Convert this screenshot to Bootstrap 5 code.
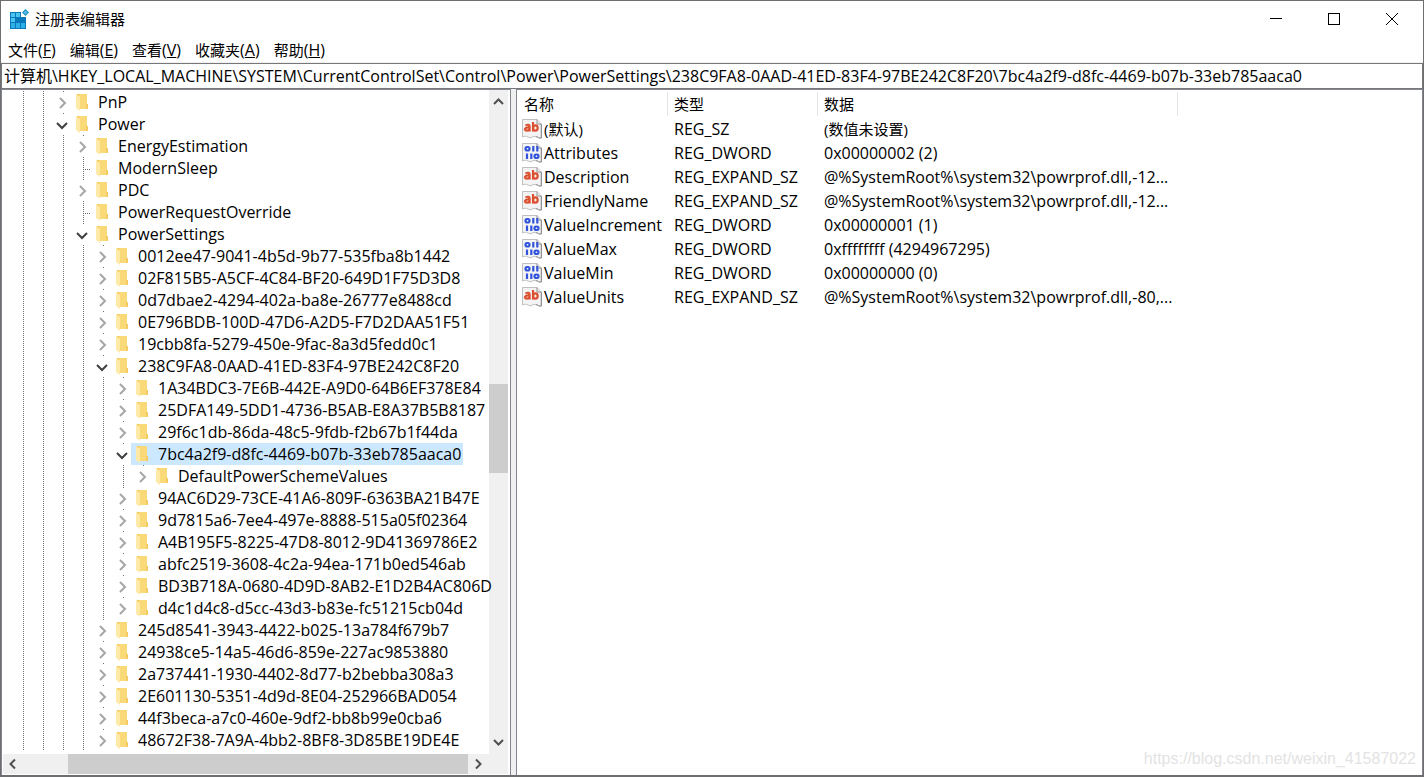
<!DOCTYPE html>
<html lang="zh-CN">
<head>
<meta charset="utf-8">
<meta name="viewport" content="width=device-width, initial-scale=1">
<title>注册表编辑器</title>
<link href="https://cdn.jsdelivr.net/npm/bootstrap@5.3.0/dist/css/bootstrap.min.css" rel="stylesheet">
<style>
body { font-family: "Open Sans", "Noto Sans CJK SC", sans-serif; font-size: 16px; line-height: 22px; color: #000; background: #fff; }
.regedit { border: 1px solid #6e6d70; border-bottom-width: 2px; background: #f0f0f0; }
.title-bar { height: 36px; padding: 0 2px 0 8px; }
.title-bar h1, .han { font-size: 15px; line-height: 22px; font-weight: 400; }
.title-bar h1 { padding-left: 6px; }
.win-btn { width: 58px; height: 36px; padding: 0; border: 0; background: none; }
.menu-bar { height: 25px; padding-left: 7px; gap: 14px; margin-bottom: 1px; }
.menu-bar a { color: #000; text-decoration: none; }
.address { height: 26px; border: 1px solid #77767a; padding: 0 3px 2px 2px; background: #fff; outline: 0; color: #000; }
.pane { border: 1px solid #828790; background: #fff; }
.tree-pane { width: 510px; }
.tree { padding-top: 1px; min-width: 0; z-index: 1; }
.tree-row { height: 22px; padding-left: 9px; white-space: nowrap; }
.cell { width: 20px; height: 22px; flex: none; }
.guide { background: repeating-linear-gradient(#707070 0 1px, transparent 1px 2px) 12px 0 / 1px 22px no-repeat; }
.leaf { background: repeating-linear-gradient(#707070 0 1px, transparent 1px 2px) 12px 0 / 1px 22px no-repeat, repeating-linear-gradient(90deg, #707070 0 1px, transparent 1px 2px) 12px 12px / 8px 1px no-repeat; }
.toggle { border: 0; padding: 0; background: linear-gradient(#707070, #707070) 12px 0 / 1px 1px no-repeat; }
.toggle svg, .node svg, .win-btn svg, .bar-btn svg { display: block; }
.node { padding: 0 2px 0 5px; gap: 10px; height: 22px; line-height: 22px; }
.node.selected { background: #cce8ff; }
.v-bar { width: 19px; background: #f0f0f0; margin-right: 2px; }
.h-bar { height: 20px; background: #f0f0f0; margin: 0 2px 1px 1px; }
.thumb { background: #cdcdcd; }
.bar-btn { border: 0; padding: 0; background: none; width: 20px; height: 20px; flex: none; }
.v-bar .bar-btn { width: 19px; }
.list-pane { margin-left: 5px; }
.values { border-collapse: collapse; table-layout: fixed; width: 661px; }
.values th { height: 27px; padding: 0 0 0 7px; background: linear-gradient(#e5e5e5, #e5e5e5) right 2px / 1px 24px no-repeat; }
.values th + th { padding-left: 6px; }
.values td { height: 24px; padding: 0 0 0 6px; white-space: nowrap; }
.values td:first-child { padding-left: 5px; }
.values svg { flex: none; margin-right: 2px; }
.stamp { right: 7px; bottom: 6px; font: 16px/20px "Liberation Sans", sans-serif; color: #e3e3e3; }
</style>
</head>
<body>
<svg class="d-none" aria-hidden="true">
  <symbol id="folder" viewBox="0 0 12 17">
    <path d="M1 0H11V10H12V15H3L1 14Z" fill="#f3cb62"/>
    <path d="M3 0H11V10H10V15H4Z" fill="#fad978"/>
    <path d="M0 0L4 3V17L0 14Z" fill="#ffe9a6"/>
  </symbol>
  <symbol id="page" viewBox="0 0 20 20">
    <path d="M.5.5H15L19 5V19C16 19.500 15 17 12 17.500C9 18 9 19.500 6 18C4 17 3 17 .5 18Z" fill="#f4f4f4" stroke="#c0c0c0"/>
    <path d="M15 .5V5H19.500V19C17 19.500 16 18 14 17.500" fill="none" stroke="#909090"/>
  </symbol>
  <symbol id="string" viewBox="0 0 20 20">
    <use href="#page"/>
    <g fill="none" stroke="#dc4f30" stroke-width="2.200"><path d="M3.500 6.200Q7.600 4.800 7.600 7.500V12.500M7.600 8.500C2 8 2 11.600 4.800 11.600Q7 11.600 7.600 10M11 3V12.500"/><ellipse cx="13.400" cy="9" rx="2.300" ry="2.700"/></g>
  </symbol>
  <symbol id="binary" viewBox="0 0 20 20">
    <use href="#page"/>
    <g fill="none" stroke="#3355dc" stroke-width="2.200"><rect x="3.500" y="4" width="4" height="3.500" rx="1.700"/><path d="M11.300 3V8.500M15.300 3V8.500M5 10.500V16M9.300 10.500V16"/><rect x="12.500" y="11.500" width="4" height="3.500" rx="1.700"/></g>
  </symbol>
</svg>

<div class="regedit d-flex flex-column vh-100 position-relative">
  <header class="title-bar d-flex align-items-center bg-white">
    <svg width="20" height="20" viewBox="0 0 20 20" aria-hidden="true">
      <path d="M1 3H17V20H1Z" fill="#0a78b8"/>
      <g fill="#4cc4f2"><path d="M2 4H6V8H2ZM7 4H11V8H7ZM2 9H6V13H2Z"/></g>
      <g fill="#2cb0e8"><path d="M2 14H6V19H2ZM7 14H11V19H7ZM12 14H16V19H12Z"/></g>
      <g fill="#0878bc"><path d="M7 9H11V13H7ZM12 9H16V13H12Z"/></g>
      <path d="M12 2H18V8H12Z" fill="#fff"/><path d="M16.500 0L20 3.500L16.500 7L13 3.500Z" fill="#178ec7"/><path d="M16.500 1.500L18.500 3.500L16.500 5.500L14.500 3.500Z" fill="#58bce6"/>
    </svg>
    <h1 class="mb-0 me-auto">注册表编辑器</h1>
    <button class="win-btn" aria-label="最小化"><svg class="mx-auto" width="12" height="12"><path d="M0 5.500H12" stroke="#000"/></svg></button>
    <button class="win-btn" aria-label="最大化"><svg class="mx-auto" width="12" height="12"><rect x=".5" y=".5" width="11" height="11" fill="none" stroke="#000"/></svg></button>
    <button class="win-btn" aria-label="关闭"><svg class="mx-auto" width="12" height="12"><path d="M0 0L12 12M12 0L0 12" stroke="#000"/></svg></button>
  </header>
  <nav class="menu-bar d-flex align-items-center bg-white">
    <a href="#"><span class="han">文件</span>(<u>F</u>)</a><a href="#"><span class="han">编辑</span>(<u>E</u>)</a><a href="#"><span class="han">查看</span>(<u>V</u>)</a><a href="#"><span class="han">收藏夹</span>(<u>A</u>)</a><a href="#"><span class="han">帮助</span>(<u>H</u>)</a>
  </nav>
  <input class="address w-100" type="text" aria-label="地址" value="计算机\HKEY_LOCAL_MACHINE\SYSTEM\CurrentControlSet\Control\Power\PowerSettings\238C9FA8-0AAD-41ED-83F4-97BE242C8F20\7bc4a2f9-d8fc-4469-b07b-33eb785aaca0">
  <main class="d-flex flex-grow-1 overflow-hidden">
    <section class="pane tree-pane d-flex flex-column flex-shrink-0 border-bottom-0">
      <div class="d-flex flex-grow-1 overflow-hidden">
        <div class="tree flex-grow-1" id="tree" role="tree"></div>
        <div class="v-bar d-flex flex-column flex-shrink-0">
          <button class="bar-btn" aria-label="向上"><svg width="19" height="20"><path d="M5 14L9.500 9.500L14 14" fill="none" stroke="#505050" stroke-width="2"/></svg></button>
          <div style="flex:273"></div><div class="thumb" style="flex:89"></div><div style="flex:260"></div>
          <button class="bar-btn" aria-label="向下"><svg width="19" height="20"><path d="M5 6L9.500 10.500L14 6" fill="none" stroke="#505050" stroke-width="2"/></svg></button>
        </div>
      </div>
      <div class="h-bar d-flex">
        <button class="bar-btn" aria-label="向左"><svg width="20" height="20"><path d="M12 5.500L7.500 10L12 14.500" fill="none" stroke="#505050" stroke-width="2"/></svg></button>
        <div style="flex:45"></div><div class="thumb" style="flex:399"></div>
        <button class="bar-btn" aria-label="向右"><svg width="20" height="20"><path d="M8 5.500L12.500 10L8 14.500" fill="none" stroke="#505050" stroke-width="2"/></svg></button>
        <div class="bar-btn"></div>
      </div>
    </section>
    <section class="pane list-pane flex-grow-1 border-bottom-0 overflow-hidden">
      <table class="values">
        <colgroup><col style="width:151px"><col style="width:150px"><col style="width:360px"></colgroup>
        <thead><tr><th class="han">名称</th><th class="han">类型</th><th class="han">数据</th></tr></thead>
        <tbody id="values"></tbody>
      </table>
    </section>
  </main>
  <div class="stamp position-absolute">https://blog.csdn.net/weixin_41587022</div>
</div>

<script src="https://cdn.jsdelivr.net/npm/bootstrap@5.3.0/dist/js/bootstrap.bundle.min.js"></script>
<script>
// [depth, state, name]; state: + collapsed, - expanded, empty for a key without subkeys
const keys = [
  [2, '+', 'PnP'], [2, '-', 'Power'], [3, '+', 'EnergyEstimation'], [3, '', 'ModernSleep'], [3, '+', 'PDC'],
  [3, '', 'PowerRequestOverride'], [3, '-', 'PowerSettings'],
  [4, '+', '0012ee47-9041-4b5d-9b77-535fba8b1442'], [4, '+', '02F815B5-A5CF-4C84-BF20-649D1F75D3D8'],
  [4, '+', '0d7dbae2-4294-402a-ba8e-26777e8488cd'], [4, '+', '0E796BDB-100D-47D6-A2D5-F7D2DAA51F51'],
  [4, '+', '19cbb8fa-5279-450e-9fac-8a3d5fedd0c1'], [4, '-', '238C9FA8-0AAD-41ED-83F4-97BE242C8F20'],
  [5, '+', '1A34BDC3-7E6B-442E-A9D0-64B6EF378E84'], [5, '+', '25DFA149-5DD1-4736-B5AB-E8A37B5B8187'],
  [5, '+', '29f6c1db-86da-48c5-9fdb-f2b67b1f44da'], [5, '-', '7bc4a2f9-d8fc-4469-b07b-33eb785aaca0'],
  [6, '+', 'DefaultPowerSchemeValues'],
  [5, '+', '94AC6D29-73CE-41A6-809F-6363BA21B47E'], [5, '+', '9d7815a6-7ee4-497e-8888-515a05f02364'],
  [5, '+', 'A4B195F5-8225-47D8-8012-9D41369786E2'], [5, '+', 'abfc2519-3608-4c2a-94ea-171b0ed546ab'],
  [5, '+', 'BD3B718A-0680-4D9D-8AB2-E1D2B4AC806D'], [5, '+', 'd4c1d4c8-d5cc-43d3-b83e-fc51215cb04d'],
  [4, '+', '245d8541-3943-4422-b025-13a784f679b7'], [4, '+', '24938ce5-14a5-46d6-859e-227ac9853880'],
  [4, '+', '2a737441-1930-4402-8d77-b2bebba308a3'], [4, '+', '2E601130-5351-4d9d-8E04-252966BAD054'],
  [4, '+', '44f3beca-a7c0-460e-9df2-bb8b99e0cba6'], [4, '+', '48672F38-7A9A-4bb2-8BF8-3D85BE19DE4E']
];
const arrow = {
  '+': '<path d="M9 7L14 12L9 17" fill="none" stroke="#a6a6a6" stroke-width="2"/>',
  '-': '<path d="M6 10L11 15L16 10" fill="none" stroke="#404040" stroke-width="2"/>'
};
document.getElementById('tree').innerHTML = keys.map(([depth, state, name]) =>
  `<div class="tree-row d-flex" role="treeitem">${'<span class="cell guide"></span>'.repeat(depth)}` +
  (state ? `<button class="cell toggle" aria-label="${name}"><svg width="20" height="22">${arrow[state]}</svg></button>` : '<span class="cell leaf"></span>') +
  `<span class="node d-flex align-items-center${name.startsWith('7bc4') ? ' selected' : ''}"><svg class="flex-shrink-0" width="12" height="17"><use href="#folder"/></svg><span>${name}</span></span></div>`).join('');

const values = [
  ['string', '(默认)', 'REG_SZ', '(数值未设置)'],
  ['binary', 'Attributes', 'REG_DWORD', '0x00000002 (2)'],
  ['string', 'Description', 'REG_EXPAND_SZ', '@%SystemRoot%\\system32\\powrprof.dll,-12...'],
  ['string', 'FriendlyName', 'REG_EXPAND_SZ', '@%SystemRoot%\\system32\\powrprof.dll,-12...'],
  ['binary', 'ValueIncrement', 'REG_DWORD', '0x00000001 (1)'],
  ['binary', 'ValueMax', 'REG_DWORD', '0xffffffff (4294967295)'],
  ['binary', 'ValueMin', 'REG_DWORD', '0x00000000 (0)'],
  ['string', 'ValueUnits', 'REG_EXPAND_SZ', '@%SystemRoot%\\system32\\powrprof.dll,-80,...']
];
// Chinese text is set one size smaller than Latin text
const text = s => /[\u4e00-\u9fff]/.test(s) ? `<span class="han">${s}</span>` : s;
document.getElementById('values').innerHTML = values.map(([icon, name, type, data]) =>
  `<tr><td><div class="d-flex align-items-center"><svg width="20" height="20"><use href="#${icon}"/></svg>${text(name)}</div></td><td>${type}</td><td>${text(data)}</td></tr>`).join('');
</script>
</body>
</html>
